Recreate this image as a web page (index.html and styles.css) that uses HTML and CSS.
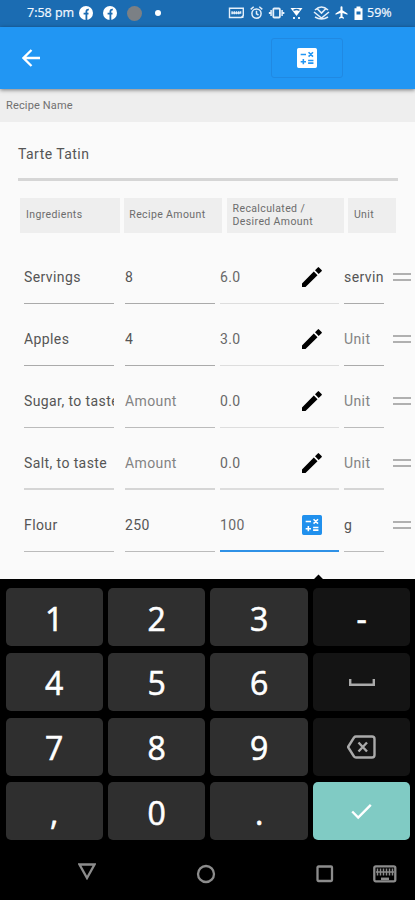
FILE: index.html
```html
<!DOCTYPE html>
<html lang="en">
<head>
<meta charset="utf-8">
<meta name="viewport" content="width=device-width, initial-scale=1">
<title>Recipe Calculator</title>
<link rel="stylesheet" href="styles.css">
</head>
<body>
<svg class="defs" aria-hidden="true">
  <symbol id="pencil" viewBox="0 0 20 20"><path d="M0 16.500V20h3.500L15.500 8.200l-3.700-3.700zM13 3.300l3.700 3.700 2.900-2.800q.6-.6 0-1.200L17 .4q-.6-.6-1.200 0z"/></symbol>
  <symbol id="calc" viewBox="3 3 18 18"><path fill="currentColor" d="M4.500 3h15a1.500 1.500 0 0 1 1.500 1.500v15a1.500 1.500 0 0 1-1.500 1.500h-15A1.500 1.500 0 0 1 3 19.500v-15A1.500 1.500 0 0 1 4.500 3z"/><path class="calc-marks" d="M6.300 8.800h4.800M13.400 6.800l4 4M17.400 6.800l-4 4M6.300 15.300h4.800M8.700 12.900v4.800M13 14.200h4.800M13 16.600h4.800"/></symbol>
  <symbol id="fb" viewBox="0 0 14 14"><circle cx="7" cy="7" r="7" fill="#fff"/><path d="M7.400 14V5.400q0-2 2.400-1.700M4.600 7.700h4.900" fill="none" stroke="#1b6cb2" stroke-width="1.800"/></symbol>
</svg>
<header class="status">
  <span class="time">7:58 pm</span>
  <svg class="fb" width="14" height="14"><use href="#fb"/></svg>
  <svg class="fb" width="14" height="14"><use href="#fb"/></svg>
  <span class="gray-dot"></span>
  <span class="white-dot"></span>
  <svg class="tray" width="136" height="18" viewBox="0 0 136 18" fill="none" stroke="#e4effa" stroke-width="1.5">
    <path d="M1.500 4.200h13.800v7.300l-2 2H1.500zM3.300 9h10M4.100 7.200v3M6.300 7.200v3M8.500 7.200v3M10.700 7.200v3M12.600 7.200v2.600" stroke-width="1.400"/><path d="M15.500 11v3h-3z" fill="#e4effa" stroke="none"/>
    <circle cx="28.500" cy="9.600" r="4.600"/><path d="M22.700 5.400l3-2.600M34.300 5.400l-3-2.600M28.500 6.800v3l2 1.200"/>
    <rect x="45.300" y="4.500" width="6.600" height="9" rx="1" stroke-width="1.800"/><path d="M43.100 6v6M54.100 6v6M41.600 8v2M55.600 8v2"/>
    <path d="M62.500 4h12l-6 8z" fill="#fff" stroke="none"/><path d="M65.500 6.300q3-1.500 6 0" stroke="#1b6cb2"/><path d="M65 14h2M70 14h2" stroke-width="2"/>
    <path d="M87 6q6.500-6 13 0M89.500 5l4 4 4-4M86 8l7.500 6 7.500-6M87 13q6.500 4 13 0" stroke-width="1.600"/>
    <path d="M119.500 10.700v-1.300l-5-3.100V3.300a1 1 0 0 0-2 0v3l-5 3.100v1.300l5-1.600v3.500l-1.500 1.100v1l2.500-.7 2.500.7v-1l-1.500-1.100V9.100z" fill="#fff" stroke="none"/>
    <path d="M126.500 4.200h2V2.500h4v1.700h2V16h-8z" fill="#fff" stroke="none"/><path d="M128.500 7.500h4v3h-4z" fill="#1b6cb2" stroke="none"/>
  </svg>
  <span class="battery">59%</span>
</header>
<nav class="appbar">
  <svg class="back" width="18" height="18" viewBox="0 0 18 18"><path d="M9.500 1L1.500 9l8 8M1.500 9H18"/></svg>
  <div class="calc-button"><svg class="calc" width="20" height="20"><use href="#calc"/></svg></div>
</nav>
<main>
  <div class="label">Recipe Name</div>
  <div class="recipe">Tarte Tatin</div>
  <div class="heads">
    <div>Ingredients</div><div>Recipe Amount</div><div>Recalculated /<br>Desired Amount</div><div>Unit</div>
  </div>
  <div class="row">
    <div class="cell">Servings</div><div class="cell">8</div>
    <div class="cell result"><span>6.0</span><svg class="edit" width="20" height="20"><use href="#pencil"/></svg></div>
    <div class="cell">servin</div><span class="handle"></span>
  </div>
  <div class="row">
    <div class="cell">Apples</div><div class="cell">4</div>
    <div class="cell result"><span>3.0</span><svg class="edit" width="20" height="20"><use href="#pencil"/></svg></div>
    <div class="cell hint">Unit</div><span class="handle"></span>
  </div>
  <div class="row light">
    <div class="cell">Sugar, to taste</div><div class="cell hint">Amount</div>
    <div class="cell result"><span>0.0</span><svg class="edit" width="20" height="20"><use href="#pencil"/></svg></div>
    <div class="cell hint">Unit</div><span class="handle"></span>
  </div>
  <div class="row light thick">
    <div class="cell">Salt, to taste</div><div class="cell hint">Amount</div>
    <div class="cell result"><span>0.0</span><svg class="edit" width="20" height="20"><use href="#pencil"/></svg></div>
    <div class="cell hint">Unit</div><span class="handle"></span>
  </div>
  <div class="row light">
    <div class="cell">Flour</div><div class="cell">250</div>
    <div class="cell result active"><span>100</span><svg class="calc blue" width="20" height="20"><use href="#calc"/></svg></div>
    <div class="cell">g</div><span class="handle"></span>
  </div>
</main>
<section class="keyboard">
  <span class="notch"></span>
  <div class="key">1</div><div class="key">2</div><div class="key">3</div><div class="key dark">-</div>
  <div class="key">4</div><div class="key">5</div><div class="key">6</div>
  <div class="key dark"><svg width="26" height="9" viewBox="0 0 26 9"><path d="M1.200 1v5.700h23.600V1" stroke-width="2.400"/></svg></div>
  <div class="key">7</div><div class="key">8</div><div class="key">9</div>
  <div class="key dark"><svg width="29" height="24" viewBox="0 0 29 24"><path d="M9 1.500h16q2.500 0 2.500 2.500v16q0 2.500-2.500 2.500H9q-1.200 0-2-1L1 12l6-9.500q.8-1 2-1zM11.500 7.500l8.500 9M20 7.500l-8.500 9" stroke-width="2.400"/></svg></div>
  <div class="key">,</div><div class="key">0</div><div class="key">.</div>
  <div class="key enter"><svg width="21" height="17" viewBox="0 0 21 17"><path d="M1.200 8.500l6 6L19.800 1.800" stroke-width="2.400"/></svg></div>
</section>
<footer class="navbar">
  <svg class="tri" width="18" height="17" viewBox="0 0 18 17"><path d="M1.500 1.500h15L9 15z"/></svg>
  <svg class="home" width="20" height="20" viewBox="0 0 20 20"><circle cx="10" cy="10" r="8"/></svg>
  <svg class="recent" width="18" height="18" viewBox="0 0 18 18"><rect x="1.500" y="1.500" width="14.500" height="14.500" rx="1"/></svg>
  <svg class="ime" width="24" height="18" viewBox="0 0 24 18"><rect x="1.300" y="1.300" width="21" height="15" rx="1.500"/><path d="M4.500 3.500v7M7.500 3.500v7M10.500 3.500v7M13.500 3.500v7M16.500 3.500v7M19.500 3.500v7M3 7h18" stroke-width="1.500"/><path d="M8 13.800h8" stroke-width="2.500"/></svg>
</footer>
</body>
</html>
```

FILE: styles.css
```css
* { box-sizing: border-box; }
body {
  margin: 0;
  width: 415px;
  height: 900px;
  display: flex;
  flex-direction: column;
  overflow: hidden;
  background: #fafafa;
  color: #555;
  font-family: Roboto, "Liberation Sans", sans-serif;
}
svg { display: block; flex: none; }
.defs { position: absolute; width: 0; height: 0; }
.calc-marks { fill: none; stroke: var(--mark); stroke-width: 1.400; }

.status {
  height: 27px;
  flex: none;
  display: flex;
  align-items: center;
  padding: 0 0 1px 27px;
  background: #1b6cb2;
  color: #f2f8ff;
  font: 12.500px/20px "Open Sans", sans-serif;
  white-space: nowrap;
  -webkit-text-stroke: .2px #f2f8ff;
}
.time { width: 52px; }
.fb { margin-right: 10px; }
.gray-dot { width: 15px; height: 15px; border-radius: 50%; background: #7b8085; }
.white-dot { width: 6px; height: 6px; margin-left: 13px; border-radius: 50%; background: #fff; }
.tray { margin-left: 67px; }
.battery { margin-left: 3px; }

.appbar {
  height: 62px;
  flex: none;
  display: flex;
  align-items: center;
  padding-left: 22px;
  background: #2196f3;
  box-shadow: 0 1px 4px rgba(0, 0, 0, .5);
  z-index: 1;
}
.back path { fill: none; stroke: #fff; stroke-width: 2.300; }
.calc-button {
  width: 72px;
  height: 40px;
  margin-left: 231px;
  display: flex;
  align-items: center;
  justify-content: center;
  border: 1px solid #2089e2;
  border-radius: 3px;
}
.calc { color: #fff; --mark: #2196f3; }
.calc.blue { color: #2090ed; --mark: #fff; }

main { height: 490px; flex: none; display: flex; flex-direction: column; }
.label {
  height: 33px;
  flex: none;
  padding-left: 6px;
  background: #eee;
  color: #707070;
  font-size: 11px;
  line-height: 33px;
  letter-spacing: .15px;
}
.recipe {
  height: 59px;
  flex: none;
  margin: 0 17px 0 18px;
  border-bottom: 3px solid #d6d6d6;
  font-size: 14px;
  line-height: 64px;
  letter-spacing: .45px;
}
.heads {
  height: 35px;
  flex: none;
  display: grid;
  grid-template-columns: 100px 98px 117px 48px;
  column-gap: 4.300px;
  margin: 17px 0 13px 20px;
}
.heads div {
  display: flex;
  align-items: center;
  padding: 0 0 2px 6px;
  background: #eee;
  color: #6c6c6c;
  font-size: 10.500px;
  line-height: 13px;
  letter-spacing: .38px;
  white-space: nowrap;
}
.heads div:nth-child(2) { padding-left: 5px; }
.row {
  height: 62px;
  flex: none;
  display: grid;
  grid-template-columns: 90px 90px 119px 40px 18px;
  column-gap: 5px;
  padding: 4px 0 4px 24px;
}
.row .cell:nth-child(2) { margin-left: 6px; width: 90px; }
.row .cell:nth-child(n+3) { margin-left: 6px; width: auto; margin-right: -6px; }
.row .handle { margin-left: 10px; }
.cell {
  height: 54px;
  border-bottom: 1px solid #aaa;
  overflow: hidden;
  white-space: nowrap;
  font-size: 14px;
  line-height: 55px;
  letter-spacing: .4px;
}
.light .cell { border-color: #bbb; }
.thick .cell { border-bottom: 2px solid #d5d5d5; }
.row .hint { color: #838383; }
.row .result {
  display: flex;
  justify-content: space-between;
  border-bottom-color: #ddd;
  color: #686868;
  padding-right: 17px;
}
.result svg { margin-top: 17px; }
.result .edit { fill: #000; }
.row .active { border-bottom: 2px solid #2f91e6; }
.handle {
  width: 18px;
  height: 8px;
  margin-top: 23px;
  border: solid #b0b0b0;
  border-width: 2px 0;
}

.keyboard {
  position: relative;
  height: 268px;
  flex: none;
  display: grid;
  grid-template-columns: repeat(4, 97.300px);
  grid-auto-rows: 58px;
  gap: 6.800px 5.200px;
  padding: 9px 0 0 5.500px;
  background: #000;
  color: #fff;
}
.notch {
  position: absolute;
  top: -3px;
  left: 315px;
  width: 7px;
  height: 7px;
  transform: rotate(45deg);
  background: #000;
}
.key {
  display: flex;
  align-items: center;
  justify-content: center;
  border-radius: 5px;
  background: #2f2f2f;
  font: 32px/58px "Open Sans", sans-serif;
  -webkit-text-stroke: .6px #fff;
  padding-top: 3px;
}
.key svg { fill: none; stroke: #aaa; margin-bottom: 2px; }
.dark { background: #141414; }
.enter { background: #80cbc4; }
.key.enter svg { stroke: #fff; margin-bottom: 2px; }

.navbar {
  height: 53px;
  flex: none;
  display: flex;
  align-items: center;
  padding-left: 78px;
  background: #000;
}
.navbar svg { fill: none; stroke: #8c8c8c; stroke-width: 2.300; }
.navbar .tri { margin-bottom: 5px; }
.home { margin-left: 100px; }
.recent { margin-left: 100px; }
.ime { margin-left: 39px; }
```
